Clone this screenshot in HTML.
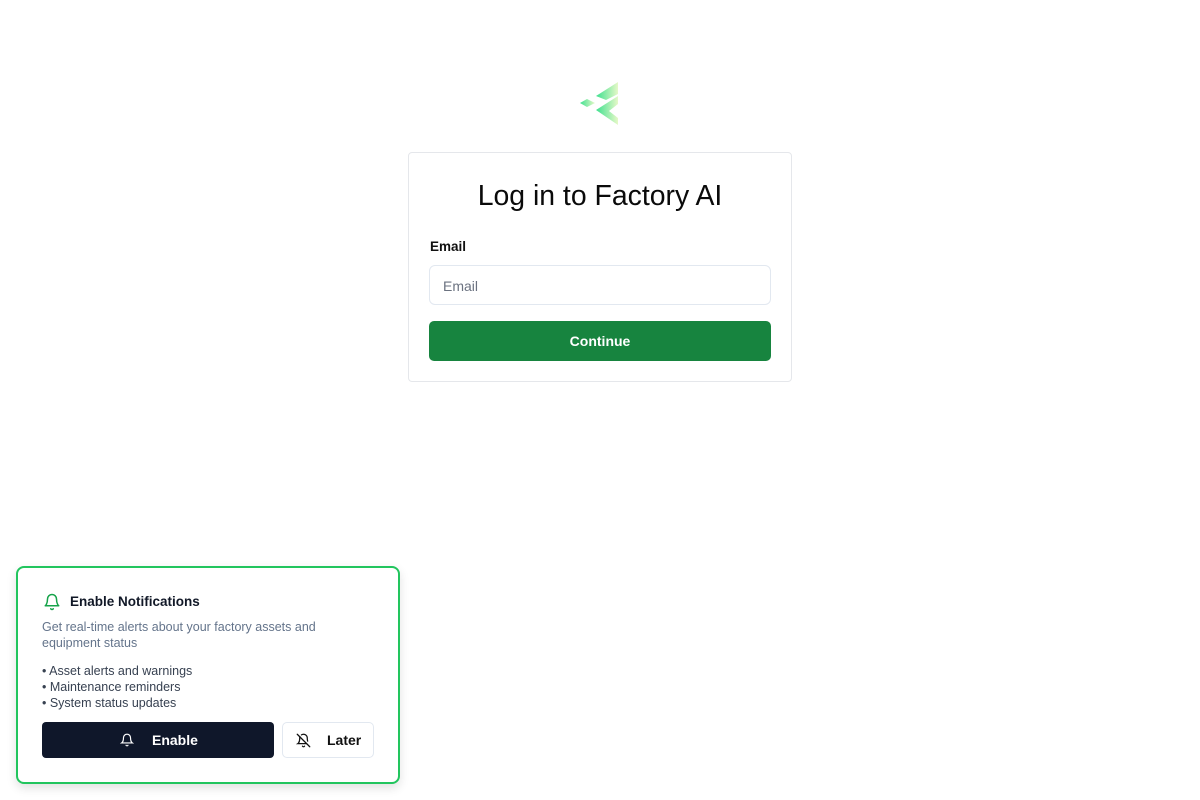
<!DOCTYPE html>
<html><head><meta charset="utf-8"><style>
body{margin:0;width:1200px;height:800px;background:#fff;font-family:"Liberation Sans",sans-serif;position:relative;overflow:hidden}
.card{position:absolute;left:408px;top:152px;width:382px;height:228px;border:1px solid #e5e7eb;border-radius:4px;box-sizing:content-box}
h1{margin:0;position:absolute;top:27px;left:0;right:0;text-align:center;font-weight:400;font-size:28.4px;color:#0a0a0a}
.lbl{position:absolute;left:21px;top:86px;font-size:13.5px;font-weight:700;color:#111}
.inp{position:absolute;left:20px;top:112px;height:40px;border:1px solid #e2e8f0;border-radius:6px;font-size:14px;color:#6b7280;line-height:40px;padding-left:13px;box-sizing:border-box;width:342px}
.btn{position:absolute;left:20px;top:168px;width:342px;height:40px;background:#17843f;border-radius:5px;color:#fff;font-weight:700;font-size:14px;text-align:center;line-height:40px}
.nt{position:absolute;left:16px;top:566px;width:380px;height:214px;border:2px solid #22c55e;border-radius:8px;box-shadow:0 4px 10px rgba(0,0,0,.12);background:#fff}
.nt .t{position:absolute;left:52px;top:26px;font-size:13.5px;font-weight:700;color:#111827}
.nt .d{position:absolute;left:24px;top:51px;font-size:12.5px;line-height:16px;color:#64748b;width:320px}
.nt ul{position:absolute;left:24px;top:95px;margin:0;padding:0;list-style:none;font-size:12.5px;line-height:16px;color:#374151}
.en{position:absolute;left:24px;top:154px;width:232px;height:36px;background:#0f172a;border-radius:4px;color:#fff;font-weight:700;font-size:14px;line-height:36px}
.lt{position:absolute;left:264px;top:154px;width:90px;height:34px;border:1px solid #e2e8f0;border-radius:5px;color:#111;font-weight:700;font-size:14px;line-height:34px}
</style></head><body>
<svg style="position:absolute;left:0;top:0" width="1200" height="200">
<defs><linearGradient id="g" x1="0" x2="1"><stop offset="0" stop-color="#3ee08f"/><stop offset="1" stop-color="#e6f9c8"/></linearGradient></defs>
<g fill="url(#g)">
<polygon points="580,103 587,99 595,103 587,107"/>
<polygon points="596,96 618,82 618,94 606,100"/>
<polygon points="596,110 618,96 618,104 609,111 618,118 618,125"/>
</g></svg>
<div class="card"><h1>Log in to Factory AI</h1><div class="lbl">Email</div><div class="inp">Email</div><div class="btn">Continue</div></div>
<div class="nt">
<svg style="position:absolute;left:25px;top:25px" width="18" height="18" viewBox="0 0 24 24" fill="none" stroke="#16a34a" stroke-width="2" stroke-linecap="round" stroke-linejoin="round"><path d="M6 8a6 6 0 0 1 12 0c0 7 3 9 3 9H3s3-2 3-9"/><path d="M10.3 21a1.94 1.94 0 0 0 3.4 0"/></svg>
<div class="t">Enable Notifications</div>
<div class="d">Get real-time alerts about your factory assets and equipment status</div>
<ul><li>• Asset alerts and warnings</li><li>• Maintenance reminders</li><li>• System status updates</li></ul>
<div class="en"><svg style="position:absolute;left:78px;top:11px" width="14" height="14" viewBox="0 0 24 24" fill="none" stroke="#fff" stroke-width="2" stroke-linecap="round"><path d="M6 8a6 6 0 0 1 12 0c0 7 3 9 3 9H3s3-2 3-9"/><path d="M10.3 21a1.94 1.94 0 0 0 3.4 0"/></svg><span style="position:absolute;left:110px">Enable</span></div>
<div class="lt"><svg style="position:absolute;left:13px;top:10px" width="15" height="15" viewBox="0 0 24 24" fill="none" stroke="#111" stroke-width="2" stroke-linecap="round"><path d="M8.7 3A6 6 0 0 1 18 8a21 21 0 0 0 .6 5"/><path d="M17 17H3s3-2 3-9a4.7 4.7 0 0 1 .3-2"/><path d="M10.3 21a1.94 1.94 0 0 0 3.4 0"/><path d="m2 2 20 20"/></svg><span style="position:absolute;left:44px">Later</span></div>
</div>
</body></html>
